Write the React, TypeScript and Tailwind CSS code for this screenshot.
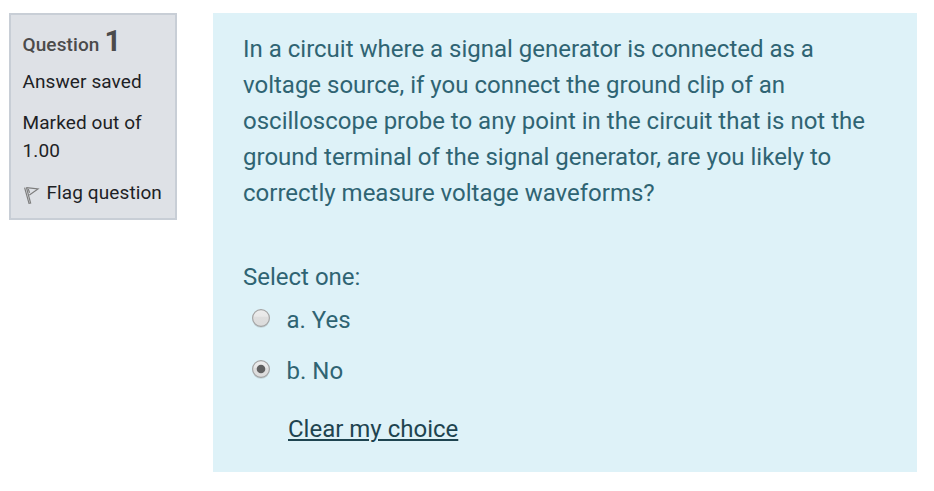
import { useState } from "react";

const choices = [
  { id: "a", label: "Yes" },
  { id: "b", label: "No" },
];

export default function App() {
  const [selected, setSelected] = useState<string | null>("b");

  return (
    <main className="flex h-[491px] w-[934px] items-start gap-9 bg-white pt-[13px] pl-[9px] font-[Roboto,sans-serif]">
      <QuestionInfo />

      <section className="h-[459px] w-[704px] bg-[#def2f8] pt-[18px] pl-[30px] text-2xl leading-9 text-[#2f6473]">
        <p className="w-[644px]">
          In a circuit where a signal generator is connected as a voltage
          source, if you connect the ground clip of an oscilloscope probe to any
          point in the circuit that is not the ground terminal of the signal
          generator, are you likely to correctly measure voltage waveforms?
        </p>
        <p className="mt-12">Select one:</p>

        <div className="mt-[7px] flex flex-col gap-[15px] pl-[9px]">
          {choices.map((choice) => (
            <label key={choice.id} className="flex h-9 items-center">
              <input
                type="radio"
                name="answer"
                className="peer sr-only"
                checked={selected === choice.id}
                onChange={() => setSelected(choice.id)}
              />
              <RadioMark checked={selected === choice.id} />
              <span className="ml-[16.5px]">
                {choice.id}. {choice.label}
              </span>
            </label>
          ))}
        </div>

        <button
          type="button"
          onClick={() => setSelected(null)}
          className="mt-[22px] ml-[45px] block text-[#1e4450] underline decoration-2 underline-offset-[2px]"
        >
          Clear my choice
        </button>
      </section>
    </main>
  );
}

function QuestionInfo() {
  return (
    <aside className="h-[207px] w-[168px] border-2 border-[#c8ced6] bg-[#dee1e6] pt-2.5 pl-[11.5px] text-[19px] leading-7 tracking-[0.1px] text-[#1d2125]">
      <h3 className="flex h-8 items-baseline gap-[5px] font-medium whitespace-nowrap text-[#4b4b4b]">
        <span>Question</span>
        <span className="text-[29px] leading-8 font-bold">1</span>
      </h3>
      <div className="mt-[11px]">Answer saved</div>
      <div className="mt-[13px] w-[125px]">Marked out of 1.00</div>
      <div className="mt-3.5 flex items-center whitespace-nowrap">
        <FlagIcon />
        <span className="ml-[7px]">Flag question</span>
      </div>
    </aside>
  );
}

function FlagIcon() {
  return (
    <svg
      width="17"
      height="20"
      viewBox="0 0 17 20"
      fill="none"
      stroke="#7d7d7d"
      strokeWidth="1.2"
      className="mt-1"
    >
      <path d="M1.6 2.6 6 18.4 7.6 18 3.4 2.4M3.4 2.6 15 4 6.4 10" />
      <path d="M5.2 4 6.6 7.8" />
    </svg>
  );
}

function RadioMark({ checked }: { checked: boolean }) {
  return (
    <svg width="18" height="20" viewBox="0 0 18 20" className="-mt-0.5">
      <defs>
        <linearGradient id="radio-fill" x1="0" y1="0" x2="0" y2="1">
          <stop offset="0" stopColor="#ededed" />
          <stop offset="0.4" stopColor="#e8e8e8" />
          <stop offset="0.45" stopColor="#dedede" />
          <stop offset="1" stopColor="#dcdcdc" />
        </linearGradient>
      </defs>
      <circle cx="9" cy="10" r="8.8" fill="#000" fillOpacity="0.12" />
      <circle
        cx="9"
        cy="9"
        r="8.4"
        fill="url(#radio-fill)"
        stroke="#a3a3a3"
        strokeWidth="1.1"
      />
      {checked && <circle cx="9" cy="9" r="4.3" fill="#606060" />}
    </svg>
  );
}
